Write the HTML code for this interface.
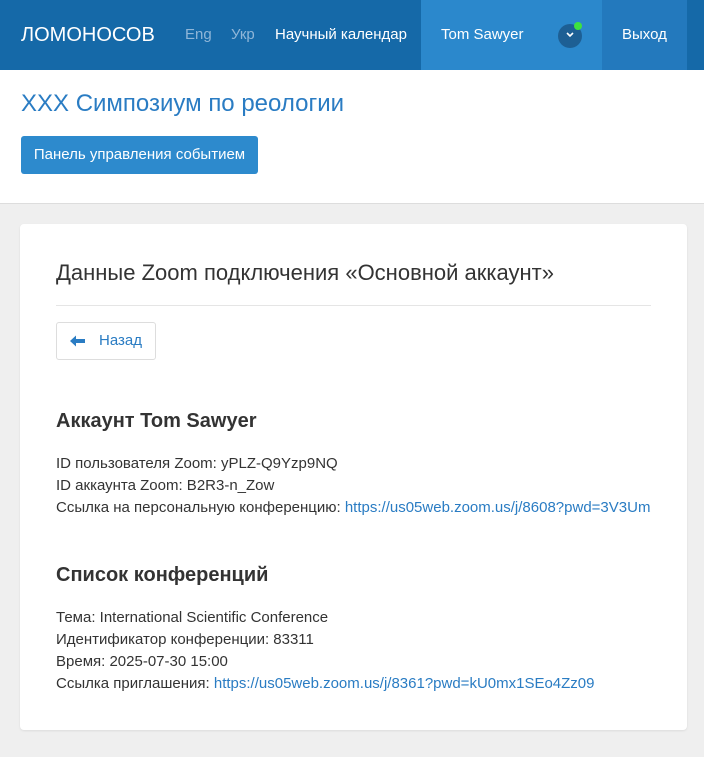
<!DOCTYPE html><html><head><meta charset="utf-8"><style>
body{margin:0;width:704px;height:757px;background:#efefef;font-family:"Liberation Sans",sans-serif;overflow:hidden;position:relative}
.nav{position:absolute;left:0;top:0;width:704px;height:70px;background:#1569a8;color:#fff}
.nav span{position:absolute;top:26px;font-size:15px}
.hl{position:absolute;left:421px;top:0;width:181px;height:70px;background:#2b88cc}
.ex{position:absolute;left:602px;top:0;width:85px;height:70px;background:#2379bd}
.hdr{position:absolute;top:70px;left:0;width:704px;height:133px;background:#fff;border-bottom:1px solid #ddd}
.card{position:absolute;left:20px;top:224px;width:667px;height:506px;background:#fff;border-radius:4px;box-shadow:0 1px 2px rgba(0,0,0,.08)}
.t{position:absolute;font-size:15px;color:#333;white-space:nowrap}
a{color:#2a7cc3;text-decoration:none}
</style></head><body>
<div class="nav">
<div class="hl"></div><div class="ex"></div>
<span style="left:21px;top:24px;font-size:20px">ЛОМОНОСОВ</span>
<span style="left:185px;color:#8fb6d8">Eng</span>
<span style="left:231px;color:#8fb6d8">Укр</span>
<span style="left:275px">Научный календар</span>
<span style="left:441px">Tom Sawyer</span>
<div style="position:absolute;left:558px;top:24px;width:24px;height:24px;border-radius:50%;background:#1d5f94"></div>
<div style="position:absolute;left:574px;top:22px;width:8px;height:8px;border-radius:50%;background:#3ee23e"></div>
<svg style="position:absolute;left:566px;top:32px" width="8" height="6"><path d="M1 1L4 4L7 1" stroke="#fff" stroke-width="1.6" fill="none"/></svg>
<span style="left:622px">Выход</span>
</div>
<div class="hdr">
<div style="position:absolute;left:21px;top:20px;font-size:24px;color:#2a7cc3">XXX Симпозиум по реологии</div>
<div style="position:absolute;left:21px;top:66px;width:237px;height:38px;background:#2d8acd;border-radius:3px;color:#fff;font-size:15px;text-align:center;white-space:nowrap"><div style="position:absolute;left:0;right:0;top:10px;line-height:18px">Панель управления событием</div></div>
</div>
<div class="card">
<div class="t" style="left:36px;top:36px;font-size:22px">Данные Zoom подключения «Основной аккаунт»</div>
<div style="position:absolute;left:36px;top:81px;width:595px;height:1px;background:#e5e5e5"></div>
<div style="position:absolute;left:36px;top:98px;width:98px;height:36px;border:1px solid #ddd;border-radius:3px"></div>
<svg style="position:absolute;left:50px;top:111px" width="16" height="12"><path d="M0 6L6 0.5V4H15V8H6V11.5Z" fill="#2a7cc3"/></svg>
<div class="t" style="left:79px;top:108px;color:#2a7cc3">Назад</div>
<div class="t" style="left:36px;top:186px;font-size:20px;font-weight:bold">Аккаунт Tom Sawyer</div>
<div class="t" style="left:36px;top:231px">ID пользователя Zoom: yPLZ-Q9Yzp9NQ</div>
<div class="t" style="left:36px;top:253px">ID аккаунта Zoom: B2R3-n_Zow</div>
<div class="t" style="left:36px;top:275px;width:595px;overflow:hidden">Ссылка на персональную конференцию: <a>https://us05web.zoom.us/j/8608?pwd=3V3UmXYZ</a></div>
<div class="t" style="left:36px;top:340px;font-size:20px;font-weight:bold">Список конференций</div>
<div class="t" style="left:36px;top:385px">Тема: International Scientific Conference</div>
<div class="t" style="left:36px;top:407px">Идентификатор конференции: 83311</div>
<div class="t" style="left:36px;top:429px">Время: 2025-07-30 15:00</div>
<div class="t" style="left:36px;top:451px">Ссылка приглашения: <a>https://us05web.zoom.us/j/8361?pwd=kU0mx1SEo4Zz09</a></div>
</div>
</body></html>
